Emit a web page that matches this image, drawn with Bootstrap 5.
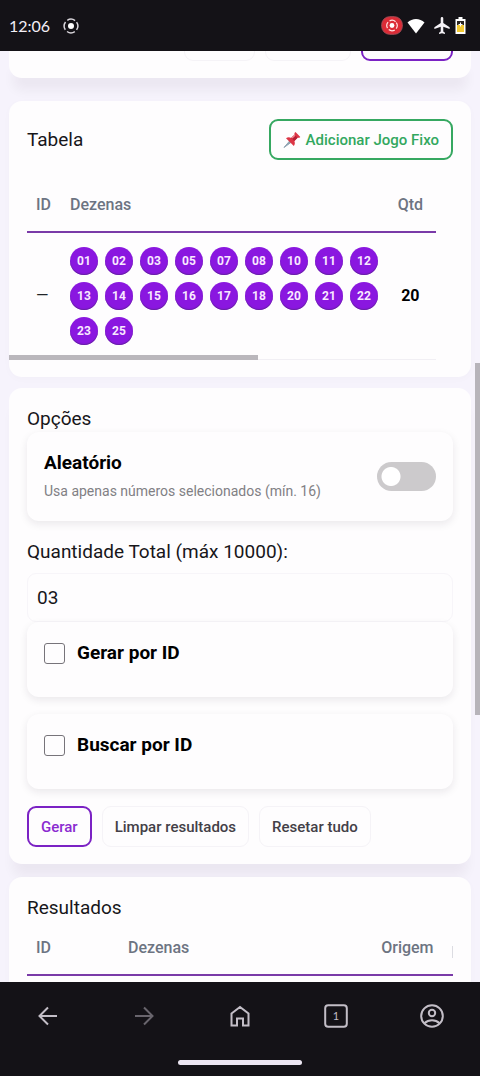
<!DOCTYPE html>
<html lang="pt-BR">
<head>
<meta charset="utf-8">
<meta name="viewport" content="width=device-width, initial-scale=1">
<title>Gerador de jogos</title>
<link href="https://cdn.jsdelivr.net/npm/bootstrap@5.3.0/dist/css/bootstrap.min.css" rel="stylesheet">
<style>
  :root { --roxo: #7b22c4; --pad: 18px; }
  body { font-family: Roboto, "Noto Sans", sans-serif; font-size: 19px; line-height: 26px; color: #17161a; background: #f6f3fc; }
  .system-bar { background: #141217; color: #f3eff6; }
  .status-bar { height: 51px; padding: 0 14px 0 9px; }
  .clock { font-family: Lato, Roboto, sans-serif; font-size: 16px; margin-right: 13px; }
  .page-area { min-height: 0; padding: 0 9px; }
  .panel { background: #fefdfe; border-radius: 13px; padding: var(--pad) var(--pad) 17px; box-shadow: 0 2px 8px rgba(40, 30, 60, .02); }
  .panel-cut { height: 27px; border-radius: 0 0 13px 13px; margin-bottom: 23px; padding-top: 0; gap: 10px; }
  .panel-cut, .options-panel { box-shadow: 0 16px 12px -4px rgba(30, 25, 35, .05); }
  .panel-title { font-size: 19px; line-height: 26px; font-weight: 400; }
  .options-panel { margin-top: 11px; }
  .results-panel { margin-top: 13px; }
  .app-btn { height: 41px; border: 1px solid #f5f3f7; border-radius: 9px; padding: 0 12px; font-size: 15px; font-weight: 500; line-height: 20px; color: #434047; background: transparent; }
  .app-btn-main { border: 2px solid var(--roxo); color: #8a2bd0; }
  .app-btn-fixed { border: 2px solid #36a861; color: #32a85e; gap: 5px; }
  .btn-wide { padding: 0 42px; }
  .btn-save { padding: 0 44px; }
  .actions { gap: 10px; }
  .grid-table { font-size: 16px; line-height: 20px; margin: 0; --bs-table-bg: transparent; }
  .grid-table > thead > tr > th { color: #6d7482; font-weight: 500; padding: 17px 9px 16px; border-bottom: 2px solid #7a3aa8; white-space: nowrap; }
  .grid-table > tbody > tr > td { padding: 14px 9px; border-bottom: 1px solid #f1eff4; vertical-align: middle; }
  .grid-scroll { margin: var(--pad) -18px 0; padding: 0 35px 0 18px; }
  .grid-thumb { left: 0; bottom: 0; width: 54%; height: 5px; background: #bab7bc; }
  .results-table { width: 106%; }
  .col-short { min-width: 34px; }
  .col-qtd { padding-right: 13px !important; color: #000; }
  .col-id { min-width: 92px; }
  .col-more { min-width: 36px; }
  .edge-mark { display: block; width: 1px; height: 12px; background: #dcdce2; }
  .chips { gap: 7px; }
  .chip { width: 28px; height: 28px; border-radius: 50%; background: #8a17e0; color: #f9e9ff; font-size: 12px; font-weight: 700; box-shadow: inset 0 -1px 1px #6420a0; }
  .option-box { background: #fefdfe; border-radius: 12px; padding: var(--pad) 17px; box-shadow: 0 3px 9px rgba(30, 20, 40, .09); }
  .option-random { margin-bottom: 18px; }
  .option-check { height: 75px; margin-bottom: 17px; gap: 12px; }
  .option-name { font-weight: 700; color: #000; }
  .option-hint { font-size: 14px; line-height: 24px; margin-top: 3px; color: #818084; }
  .form-check-input.toggle { width: 59px; height: 29px; margin: 0; border: 0; border-radius: 15px; background: radial-gradient(circle at 14px 50%, #fff 9px, transparent 10px) #cccacc; }
  .form-check-input.box { width: 21px; height: 21px; margin: 3px 0 0; border: 1px solid #77747a; border-radius: 3px; background: transparent; }
  .qty { height: 49px; margin-top: 8px; padding: 0 9px; font-size: 19px; color: #17161a; background: transparent; border: 1px solid #f7f5f9; border-radius: 9px; }
  .page-thumb { right: 0; top: 33.5%; width: 5px; height: 37.8%; background: #b7b4ba; }
  .nav-row { height: 66px; }
  .nav-row button { background: none; border: 0; color: #c3bec7; }
  .nav-row button:disabled { color: #69656d; }
  .home-pill { width: 26%; height: 5px; border-radius: 3px; background: #ece6f2; margin: 12px auto 11px; }
</style>
</head>
<body>
<div class="d-flex flex-column vh-100">
  <header class="system-bar status-bar d-flex align-items-center flex-shrink-0">
    <span class="clock">12:06</span>
    <svg width="16" height="16" viewBox="0 0 16 16" fill="none" stroke="#d8d4da" stroke-width="1.5" aria-hidden="true"><circle cx="8" cy="8" r="6.800" stroke-dasharray="8.200 2.480" stroke-dashoffset="-1.240" transform="rotate(-45 8 8)"/><circle cx="8" cy="8" r="3" fill="#fff" stroke="none"/></svg>
    <div class="ms-auto d-flex align-items-center">
      <svg width="22" height="19" viewBox="0 0 22 19" aria-hidden="true"><rect x=".7" y=".7" width="20.6" height="17.6" rx="8" fill="#dc2b36" stroke="#a54b54"/><circle cx="11" cy="9.500" r="5.200" fill="none" stroke="#ffe2e2" stroke-width="1.200" stroke-dasharray="6.200 1.970" stroke-dashoffset="-.980" transform="rotate(-45 11 9.500)"/><circle cx="11" cy="9.500" r="2.400" fill="#fff"/></svg>
      <svg class="ms-1" width="18" height="16" viewBox="0 0 18 16" aria-hidden="true"><path d="M9 15.500 .5 4.500C5-.3 13-.3 17.500 4.500Z" fill="#fff"/></svg>
      <svg class="ms-2" width="18" height="17" viewBox="2 2 20 20" aria-hidden="true"><path d="M21 16v-2l-7.500-5V3.500a1.500 1.500 0 0 0-3 0V9L3 14v2l7.500-2.500V19L8.500 20.500V22l3.500-1 3.500 1v-1.500L13.500 19v-5.500Z" fill="#f4f1f6"/></svg>
      <svg class="ms-1" width="11" height="17" viewBox="0 0 11 17" aria-hidden="true"><path d="M3.500 0h4v2H10.500v15H.5V2h3Z" fill="#fff"/><path d="M2 4h7v4H2Z" fill="#29241f"/><path d="M2 8h7v7H2Z" fill="#f2c933"/><path d="M5.500 5.500v4M3.500 7.500h4" stroke="#fff"/></svg>
    </div>
  </header>

  <main class="page-area flex-fill overflow-hidden position-relative">
    <section class="panel panel-cut d-flex justify-content-end align-items-end overflow-hidden" aria-label="Seleção">
      <button class="app-btn flex-shrink-0 col-2" type="button" aria-label="Limpar seleção"></button>
      <button class="app-btn flex-shrink-0 btn-wide" type="button" aria-label="Selecionar todos"></button>
      <button class="app-btn app-btn-main flex-shrink-0 btn-save" type="button" aria-label="Salvar seleção"></button>
    </section>

    <section class="panel">
      <div class="d-flex justify-content-between align-items-center">
        <h2 class="panel-title m-0">Tabela</h2>
        <button class="app-btn app-btn-fixed d-flex align-items-center" type="button">
          <svg width="18" height="18" viewBox="0 0 18 18" aria-hidden="true"><path d="M1 16.500 7 9.500l1.500 1.500Z" fill="#8fa3b1" stroke="#8fa3b1"/><path d="M3 7.200c2-1.400 3.800-.9 5.200-.3l3.300-3.100c-.3-1.300.2-2.300 1-2.800l4.800 4.900c-.7.8-1.700 1.100-2.700.8l-3.200 3.200c.6 1.700.8 3.300-.6 5Z" fill="#dc3545"/><path d="m8.200 6.900 3.300-3.100 3.100 2.900-3.200 3.200Z" fill="#b91f35"/><path d="m9 7 3-2.800" stroke="#f5848c" stroke-width="1.200"/></svg>
          Adicionar Jogo Fixo
        </button>
      </div>
      <div class="grid-scroll position-relative">
        <table class="table grid-table">
          <thead><tr><th class="col-short">ID</th><th class="w-100">Dezenas</th><th class="col-qtd">Qtd</th></tr></thead>
          <tbody><tr>
            <td>—</td>
            <td><div class="chips d-flex flex-wrap" id="chips"></div></td>
            <td class="col-qtd text-center fw-bold">20</td>
          </tr></tbody>
        </table>
        <div class="grid-thumb position-absolute"></div>
      </div>
    </section>

    <section class="panel options-panel">
      <h2 class="panel-title m-0">Opções</h2>
      <div class="option-box option-random d-flex justify-content-between align-items-center">
        <div>
          <label class="option-name d-block" for="aleatorio">Aleatório</label>
          <div class="option-hint">Usa apenas números selecionados (mín. 16)</div>
        </div>
        <input class="form-check-input toggle flex-shrink-0" type="checkbox" role="switch" id="aleatorio">
      </div>
      <label class="d-block" for="quantidade">Quantidade Total (máx 10000):</label>
      <input class="form-control qty" id="quantidade" type="text" inputmode="numeric" value="03">
      <div class="option-box option-check d-flex align-items-start">
        <input class="form-check-input box flex-shrink-0" type="checkbox" id="gerar-id">
        <label class="option-name" for="gerar-id">Gerar por ID</label>
      </div>
      <div class="option-box option-check d-flex align-items-start">
        <input class="form-check-input box flex-shrink-0" type="checkbox" id="buscar-id">
        <label class="option-name" for="buscar-id">Buscar por ID</label>
      </div>
      <div class="actions d-flex flex-wrap">
        <button class="app-btn app-btn-main" type="button">Gerar</button>
        <button class="app-btn" type="button">Limpar resultados</button>
        <button class="app-btn" type="button">Resetar tudo</button>
      </div>
    </section>

    <section class="panel results-panel position-relative">
      <h2 class="panel-title m-0">Resultados</h2>
      <div class="overflow-hidden">
        <table class="table grid-table results-table">
          <thead><tr><th class="col-id">ID</th><th class="w-100">Dezenas</th><th>Origem</th><th class="col-more"><span class="edge-mark"></span></th></tr></thead>
        </table>
      </div>
    </section>
    <div class="page-thumb position-absolute"></div>
  </main>

  <footer class="system-bar flex-shrink-0">
    <nav class="nav-row d-flex" aria-label="Navegador">
      <button class="flex-fill w-100" type="button" aria-label="Voltar"><svg width="20" height="20" viewBox="0 0 20 20" fill="none" stroke="currentColor" stroke-width="2"><path d="M19 10H2M10 1.500 1.500 10l8.500 8.500"/></svg></button>
      <button class="flex-fill w-100" type="button" aria-label="Avançar" disabled><svg width="20" height="20" viewBox="0 0 20 20" fill="none" stroke="currentColor" stroke-width="2"><path d="M1 10h17M10 1.500l8.500 8.500-8.500 8.500"/></svg></button>
      <button class="flex-fill w-100" type="button" aria-label="Início"><svg width="20" height="22" viewBox="0 0 20 22" fill="none" stroke="currentColor" stroke-width="2"><path d="M1.500 8.500 10 2l8.500 6.500V20.500H13v-7H7v7H1.500Z"/></svg></button>
      <button class="flex-fill w-100" type="button" aria-label="Abas"><svg width="24" height="24" viewBox="0 0 24 24" fill="none" stroke="currentColor" stroke-width="2"><rect x="1.200" y="1.200" width="21.600" height="21.600" rx="3"/><text x="12" y="16" text-anchor="middle" font-family="Lato, sans-serif" font-size="11" fill="currentColor" stroke="none">1</text></svg></button>
      <button class="flex-fill w-100" type="button" aria-label="Perfil"><svg width="24" height="24" viewBox="0 0 24 24" fill="none" stroke="currentColor" stroke-width="2"><circle cx="12" cy="12" r="10.800"/><circle cx="12" cy="9" r="3.200"/><path d="M4.500 19.300c4-4 11-4 15 0"/></svg></button>
    </nav>
    <div class="home-pill"></div>
  </footer>
</div>
<script src="https://cdn.jsdelivr.net/npm/bootstrap@5.3.0/dist/js/bootstrap.bundle.min.js"></script>
<script>
  const dezenas = ['01','02','03','05','07','08','10','11','12','13','14','15','16','17','18','20','21','22','23','25'];
  document.getElementById('chips').innerHTML = dezenas
    .map(n => `<span class="chip d-flex align-items-center justify-content-center">${n}</span>`).join('');
</script>
</body>
</html>
